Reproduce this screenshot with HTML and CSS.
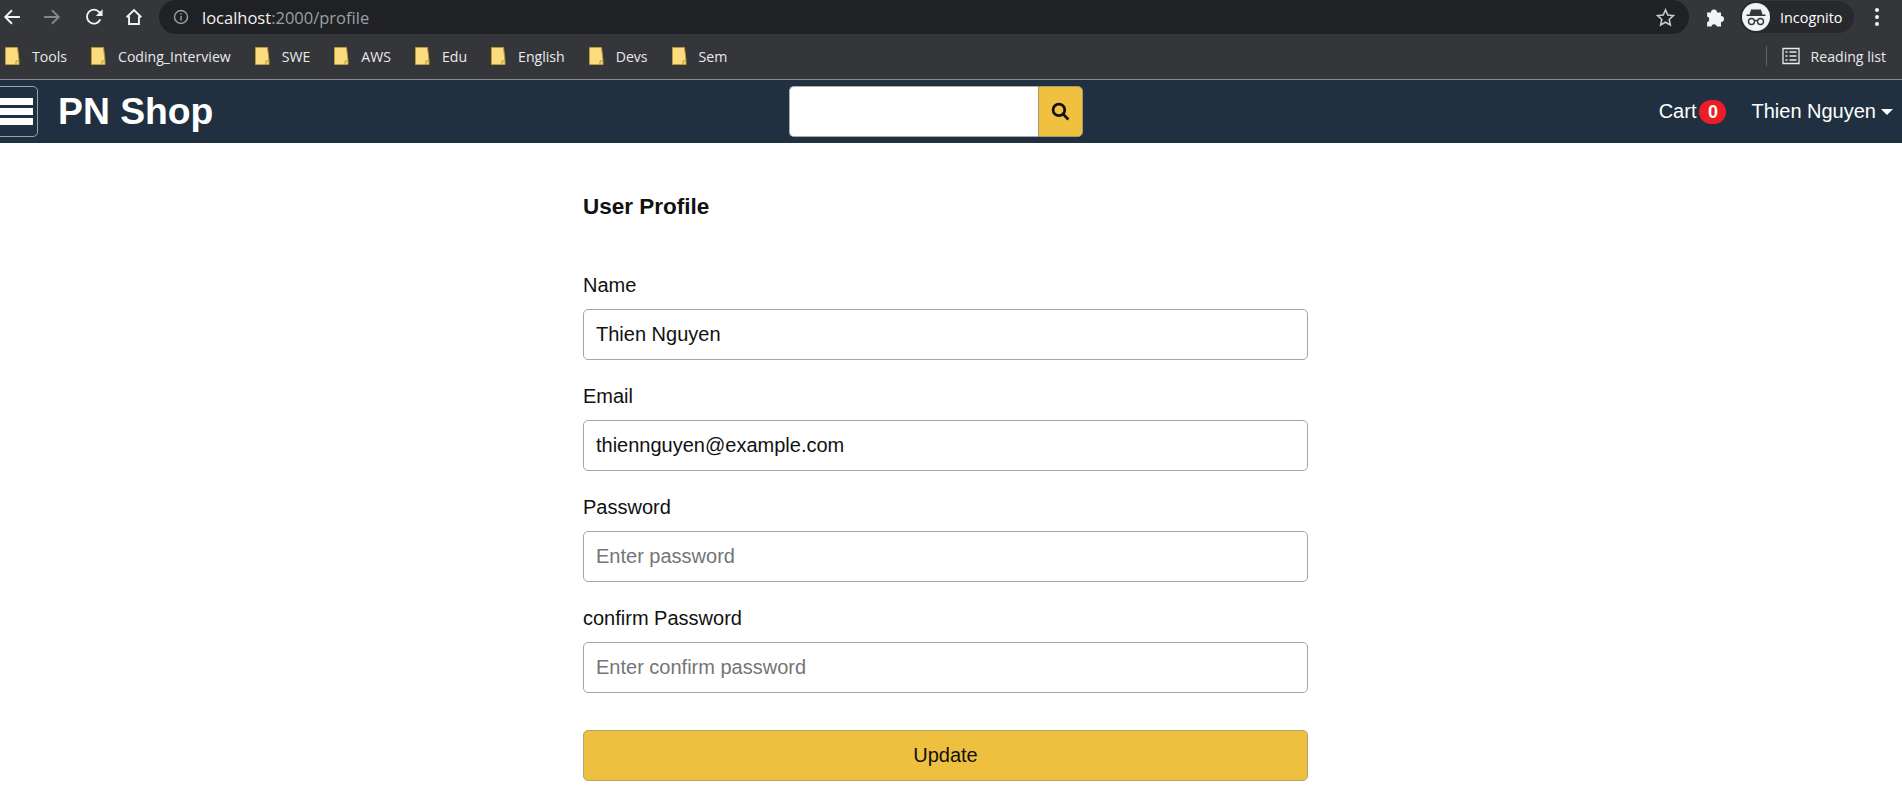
FILE: index.html
```html
<!DOCTYPE html>
<html lang="en">
<head>
<meta charset="utf-8">
<title>PN Shop</title>
<link rel="stylesheet" href="styles.css">
</head>
<body>
<div class="toolbar">
  <svg class="tool back" viewBox="0 0 16 16"><path d="M15 8H2.5M8 2 2 8l6 6"/></svg>
  <svg class="tool forward" viewBox="0 0 16 16"><path d="M1 8h12.5M8 2l6 6-6 6"/></svg>
  <svg class="tool reload" viewBox="0 0 16 16"><path d="M13.6 10.2A6.2 6.2 0 1 1 12.6 3.6L14.6 5.6"/><path class="solid" d="M15.6 1v6h-6z"/></svg>
  <svg class="tool home" viewBox="0 0 16 16"><path d="M1.5 8.2 8 1.8l6.5 6.4M3.6 7.4v6.8h8.8V7.4"/></svg>
  <div class="omnibox">
    <svg class="info" viewBox="0 0 16 16"><circle cx="8" cy="8" r="6.5"/><path d="M8 7v4.6M8 4.2v1.6"/></svg>
    <span class="host">localhost</span><span class="path">:2000/profile</span>
    <svg class="star" viewBox="0 0 18 18"><path d="m9 1.8 2.2 4.9 5.3.6-4 3.6 1.1 5.2L9 13.5l-4.6 2.6 1.1-5.2-4-3.6 5.3-.6z"/></svg>
  </div>
  <svg class="puzzle" viewBox="0 0 18 18"><path d="M1 5h3.500a2.700 2.700 0 1 1 5.400 0H13.500v3.200a2.700 2.700 0 1 1 0 5.400V17.500H9.800a2.600 2.600 0 0 0-5 0H1v-3.700a2.700 2.700 0 0 0 0-5.200z"/></svg>
  <div class="profile">
    <svg class="incognito" viewBox="0 0 28 28"><circle class="disc" cx="14" cy="14" r="14"/><path class="ink" d="M9 6.500h10l1.500 5h3v1.500h-19v-1.500h3z"/><circle class="glass" cx="9.500" cy="18.500" r="3"/><circle class="glass" cx="18.500" cy="18.500" r="3"/><path class="glass" d="M12.500 18c1-.7 2-.7 3 0"/></svg>
    <span>Incognito</span>
  </div>
  <div class="kebab"><i></i><i></i><i></i></div>
</div>
<div class="bookmarks">
  <a class="mark"><svg class="folder" viewBox="0 0 15 18"><path d="M.5.500h12l1.500 13v4H.5z"/><path class="fold" d="M11 17.500v-3.500h3"/></svg>Tools</a>
  <a class="mark"><svg class="folder" viewBox="0 0 15 18"><path d="M.5.500h12l1.500 13v4H.5z"/><path class="fold" d="M11 17.500v-3.500h3"/></svg>Coding_Interview</a>
  <a class="mark"><svg class="folder" viewBox="0 0 15 18"><path d="M.5.500h12l1.500 13v4H.5z"/><path class="fold" d="M11 17.500v-3.500h3"/></svg>SWE</a>
  <a class="mark"><svg class="folder" viewBox="0 0 15 18"><path d="M.5.500h12l1.500 13v4H.5z"/><path class="fold" d="M11 17.500v-3.500h3"/></svg>AWS</a>
  <a class="mark"><svg class="folder" viewBox="0 0 15 18"><path d="M.5.500h12l1.500 13v4H.5z"/><path class="fold" d="M11 17.500v-3.500h3"/></svg>Edu</a>
  <a class="mark"><svg class="folder" viewBox="0 0 15 18"><path d="M.5.500h12l1.500 13v4H.5z"/><path class="fold" d="M11 17.500v-3.500h3"/></svg>English</a>
  <a class="mark"><svg class="folder" viewBox="0 0 15 18"><path d="M.5.500h12l1.500 13v4H.5z"/><path class="fold" d="M11 17.500v-3.500h3"/></svg>Devs</a>
  <a class="mark"><svg class="folder" viewBox="0 0 15 18"><path d="M.5.500h12l1.500 13v4H.5z"/><path class="fold" d="M11 17.500v-3.500h3"/></svg>Sem</a>
  <div class="reading">
    <svg class="list-icon" viewBox="0 0 18 18"><path d="M1 1.500h16v15H1zM3.500 5h2M7.500 5h7M3.500 9h2M7.500 9h7M3.500 13h2M7.500 13h7"/></svg>
    Reading list
  </div>
</div>
<header class="navbar">
  <button class="burger" type="button"><i></i><i></i><i></i></button>
  <a class="brand">PN Shop</a>
  <form class="search">
    <input class="search-input" type="text">
    <button class="search-btn" type="button"><svg viewBox="0 0 18 18"><circle cx="7.500" cy="7.500" r="5.500"/><path d="m11.500 11.500 5 5"/></svg></button>
  </form>
  <a class="cart">Cart<span class="badge">0</span></a>
  <a class="user">Thien Nguyen<span class="caret"></span></a>
</header>
<main class="page">
  <h1 class="title">User Profile</h1>
  <form class="profile-form">
    <div class="group">
      <label class="label">Name</label>
      <input class="field" type="text" value="Thien Nguyen">
    </div>
    <div class="group">
      <label class="label">Email</label>
      <input class="field" type="text" value="thiennguyen@example.com">
    </div>
    <div class="group">
      <label class="label">Password</label>
      <input class="field" type="password" placeholder="Enter password">
    </div>
    <div class="group">
      <label class="label">confirm Password</label>
      <input class="field" type="password" placeholder="Enter confirm password">
    </div>
    <button class="update" type="button">Update</button>
  </form>
</main>
</body>
</html>
```
FILE: styles.css
```css
* { box-sizing: border-box; }
html, body { margin: 0; height: 100%; overflow: hidden; }
body { background: #fff; color: #111; font-family: "Liberation Sans", Arial, sans-serif; font-size: 20px; }

.toolbar { height: 34px; background: #35363a; display: flex; align-items: center; color: #fff; font-family: "Open Sans", sans-serif; }
.tool { width: 18px; height: 18px; fill: none; stroke: #f1f3f4; stroke-width: 1.7; flex: none; }
.tool .solid { fill: #f1f3f4; stroke: none; }
.back { margin-left: 3px; }
.forward { margin-left: 22px; stroke: #85878b; }
.reload { margin-left: 24px; }
.home { margin-left: 22px; }
.omnibox { margin-left: 16px; width: 1530px; height: 34px; background: #202124; border-radius: 17px; display: flex; align-items: center; padding-left: 14px; padding-right: 14px; font-size: 16.500px; }
.info { width: 16px; height: 16px; fill: none; stroke: #9aa0a6; stroke-width: 1.4; margin-right: 13px; }
.host { color: #f1f3f4; }
.path { color: #9aa0a6; }
.star { width: 19px; height: 19px; margin-left: auto; fill: none; stroke: #c8cacc; stroke-width: 1.5; }
.puzzle { width: 20px; height: 20px; margin-left: 17px; fill: #f1f3f4; flex: none; }
.profile { margin-left: 14px; height: 32px; width: 114px; flex: none; background: #28292c; border-radius: 16px; display: flex; align-items: center; gap: 10px; padding-left: 2px; font-size: 14.400px; }
.incognito { width: 28px; height: 28px; flex: none; }
.disc { fill: #f1f3f4; }
.ink { fill: #35363a; }
.glass { fill: none; stroke: #35363a; stroke-width: 1.4; }
.kebab { margin-left: 21px; display: flex; flex-direction: column; gap: 3px; }
.kebab i { width: 4px; height: 4px; background: #f1f3f4; border-radius: 50%; }

.bookmarks { height: 46px; background: #35363a; border-bottom: 1px solid #8a8c8f; display: flex; align-items: center; padding-left: 5px; padding-bottom: 1px; color: #e8eaed; font-family: "Open Sans", sans-serif; font-size: 14.100px; }
.mark { display: flex; align-items: center; gap: 12px; margin-right: 24px; }
.folder { width: 15px; height: 18px; fill: #fddc7d; stroke: #b69a3c; stroke-width: 1; flex: none; }
.fold { fill: none; }
.reading { margin-left: auto; margin-right: 16px; padding-left: 15px; border-left: 1px solid #5f6164; height: 20px; display: flex; align-items: center; gap: 11px; color: #e8eaed; }
.list-icon { width: 18px; height: 18px; fill: none; stroke: #e8eaed; stroke-width: 1.300; }

.navbar { height: 63px; background: #203040; display: flex; align-items: center; color: #fff; }
.burger { width: 58px; height: 51px; margin-left: -20px; background: transparent; border: 1px solid #9aa3ac; border-radius: 5px; display: flex; flex-direction: column; justify-content: center; align-items: flex-end; gap: 3px; padding: 0 4px 0 0; flex: none; }
.burger i { width: 40px; height: 7px; background: #fff; }
.brand { margin-left: 20px; font-size: 37.300px; font-weight: 700; width: 731px; flex: none; }
.search { display: flex; width: 294px; height: 51px; flex: none; }
.search-input { width: 249px; height: 100%; border: 1px solid #a9adb1; border-right: none; border-radius: 5px 0 0 5px; background: #fff; padding: 0; }
.search-btn { width: 45px; height: 100%; background: #f0c040; border: 1px solid #a79a70; border-radius: 0 5px 5px 0; padding: 0; display: flex; align-items: center; justify-content: center; }
.search-btn svg { width: 19px; height: 19px; fill: none; stroke: #111; stroke-width: 2.600; }
.cart { margin-left: auto; display: flex; align-items: center; gap: 3px; }
.badge { width: 27px; height: 24px; border-radius: 12px; background: #ee1c25; color: #fff; font-size: 18px; font-weight: 700; text-align: center; line-height: 24px; }
.user { margin-left: 25px; margin-right: 9px; display: flex; align-items: center; gap: 5px; }
.caret { width: 0; height: 0; border-left: 6px solid transparent; border-right: 6px solid transparent; border-top: 6px solid #fff; }

.page { padding: 0 0 0 583px; width: 1308px; }
.title { margin: 0; padding-top: 49px; font-size: 22.500px; line-height: 30px; font-weight: 700; color: #111; }
.profile-form { margin-top: 51px; display: flex; flex-direction: column; }
.group { display: flex; flex-direction: column; height: 111px; }
.label { line-height: 24px; margin-bottom: 12px; color: #111; }
.field { height: 51px; width: 100%; border: 1px solid #a4a6a8; border-radius: 5px; padding: 0 12px; font: inherit; color: #111; background: #fff; }
.field::placeholder { color: #757575; }
.update { margin-top: 13px; height: 51px; width: 100%; background: #efbf3f; border: 1px solid #b0a47a; border-radius: 5px; font: inherit; color: #111; padding: 0; }
```
